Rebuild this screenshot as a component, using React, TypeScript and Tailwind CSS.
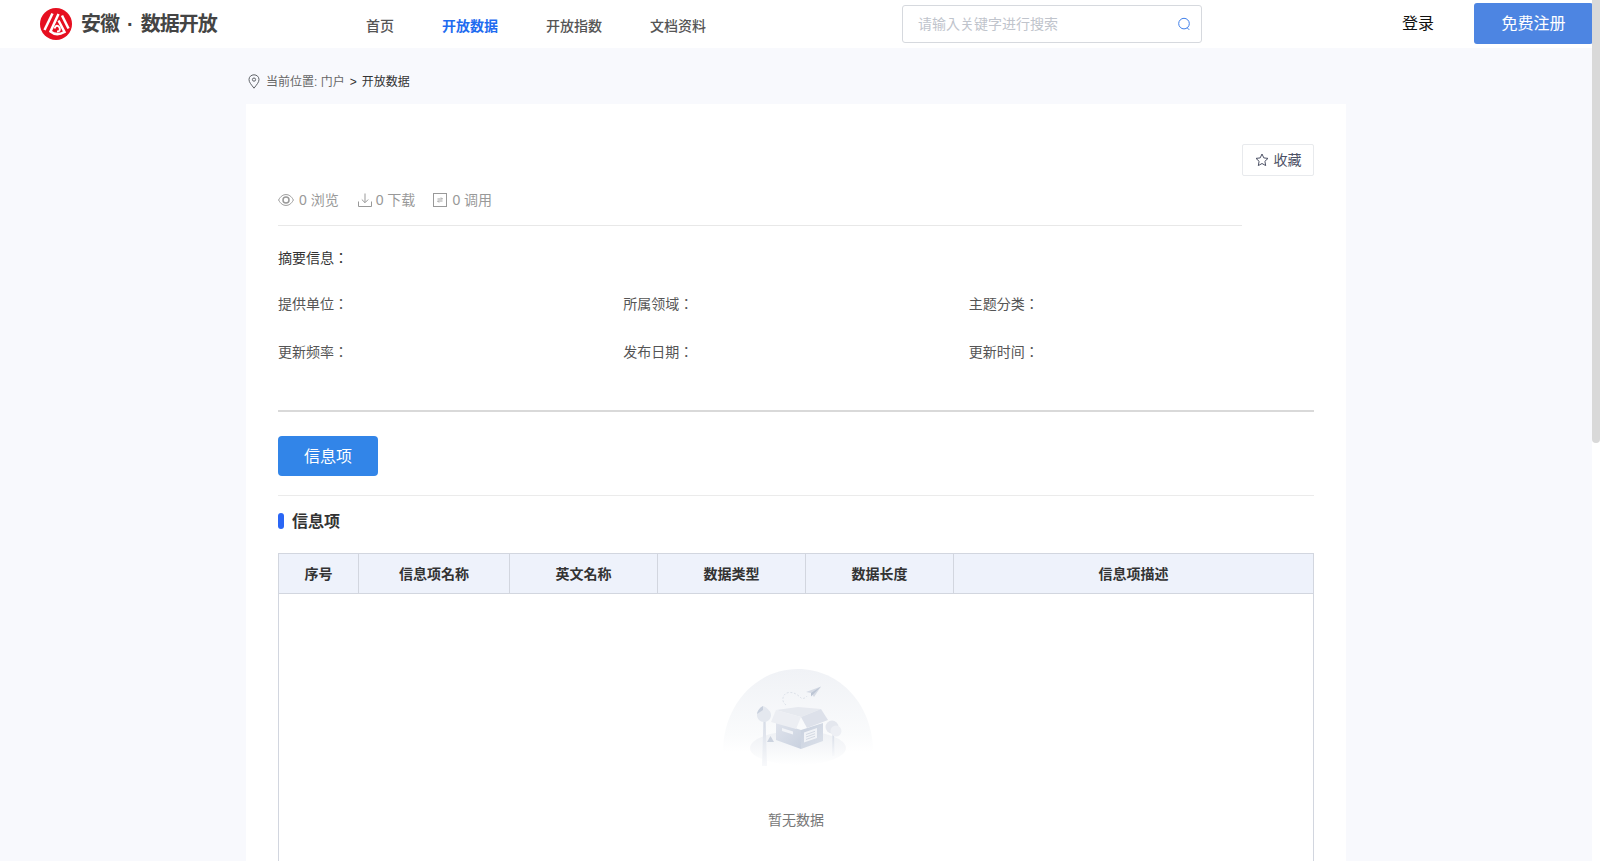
import React from "react";

function Logo() {
  return (
    <svg width="32" height="32" viewBox="0 0 32 32" className="shrink-0">
      <circle cx="16" cy="16" r="16" fill="#e60f20" />
      <g stroke="#fff" strokeWidth="2.5" fill="none">
        <path d="M12.5 5.5 L4.5 22" />
        <path d="M18.5 6 L10.5 23.5 Q16.5 28.5 24.5 24 L18.5 12.5" />
        <path d="M14.5 20.5 Q16.5 15.5 19.5 19.5 Q21 23.5 17 23.5" strokeWidth="2" />
        <path d="M22 7.5 L28.5 20.5" />
      </g>
    </svg>
  );
}

function Eye() {
  return (
    <svg width="16" height="16" viewBox="0 0 16 16" fill="none" stroke="#999" strokeWidth="1">
      <path d="M0.6 8 C2.8 3.8 5.5 2.6 8 2.6 C10.5 2.6 13.2 3.8 15.4 8 C13.2 12.2 10.5 13.4 8 13.4 C5.5 13.4 2.8 12.2 0.6 8 Z" />
      <circle cx="8" cy="8" r="3" strokeWidth="1.5" />
    </svg>
  );
}

function Download() {
  return (
    <svg width="14" height="14" viewBox="0 0 14 14" fill="none" stroke="#999" strokeWidth="1">
      <path d="M7 0.5 V9.5 M3.8 6.5 L7 9.7 L10.2 6.5" />
      <path d="M0.5 8.5 V13.5 H13.5 V8.5" />
    </svg>
  );
}

function CallIcon() {
  return (
    <svg width="14" height="14" viewBox="0 0 14 14" fill="none" stroke="#999" strokeWidth="1">
      <rect x="0.5" y="0.5" width="13" height="13" />
      <path d="M4.5 6 H9.5 L8 4.5 M9.5 8 H4.5 L6 9.5" strokeWidth="0.9" />
    </svg>
  );
}

function Pin() {
  return (
    <svg width="12" height="15" viewBox="0 0 12 15" fill="none" stroke="#5f6368" strokeWidth="1">
      <path d="M6 14.2 C3.5 10.8 1 8.4 1 5.6 C1 2.8 3.2 0.8 6 0.8 C8.8 0.8 11 2.8 11 5.6 C11 8.4 8.5 10.8 6 14.2 Z" />
      <circle cx="6" cy="5.6" r="1.6" />
    </svg>
  );
}

function Star() {
  return (
    <svg width="14" height="14" viewBox="0 0 14 14" fill="none" stroke="#4d5266" strokeWidth="1">
      <path d="M7 1 L8.8 4.9 L13 5.4 L9.9 8.3 L10.7 12.6 L7 10.5 L3.3 12.6 L4.1 8.3 L1 5.4 L5.2 4.9 Z" strokeLinejoin="round" />
    </svg>
  );
}

function SearchIcon() {
  return (
    <svg width="14" height="14" viewBox="0 0 14 14" fill="none" stroke="#3f7fea" strokeWidth="1">
      <circle cx="7" cy="6.6" r="5.3" />
      <path d="M10.4 11 L12 12.6" strokeLinecap="round" />
    </svg>
  );
}

function EmptyArt() {
  return (
    <svg width="160" height="120" viewBox="0 0 160 120" className="ml-[9px] block">
      <defs>
        <linearGradient id="dome" x1="0" y1="0" x2="0" y2="1">
          <stop offset="0" stopColor="#f0f2f6" />
          <stop offset="0.8" stopColor="#fafbfc" />
          <stop offset="1" stopColor="#ffffff" />
        </linearGradient>
        <linearGradient id="ground" x1="0" y1="0" x2="0" y2="1">
          <stop offset="0" stopColor="#eef0f4" />
          <stop offset="1" stopColor="#ffffff" />
        </linearGradient>
        <linearGradient id="boxL" x1="0" y1="0" x2="1" y2="1">
          <stop offset="0" stopColor="#dfe3ec" />
          <stop offset="1" stopColor="#c9d1df" />
        </linearGradient>
        <linearGradient id="boxR" x1="0" y1="0" x2="1" y2="1">
          <stop offset="0" stopColor="#c8d0de" />
          <stop offset="1" stopColor="#dce1ea" />
        </linearGradient>
        <linearGradient id="trunk" x1="0" y1="0" x2="0" y2="1">
          <stop offset="0" stopColor="#d4dae5" />
          <stop offset="1" stopColor="#f8f9fb" />
        </linearGradient>
      </defs>
      <path d="M2 92 C2 45 35 9 77 9 C119 9 152 45 152 92 Z" fill="url(#dome)" />
      <ellipse cx="77" cy="88" rx="48" ry="17" fill="url(#ground)" />
      <path d="M42.5 58 H44.5 L46 106 H41 Z" fill="url(#trunk)" />
      <path d="M42 46 C38 48 36 52 36 55 C36 59 39 62 43 62 C47 62 50 59 50 55 C50 52 47 48 42 46 Z" fill="#e4e8ef" />
      <path d="M42 46 C38 48 36 52 36 54 L42 50 Z" fill="#c8d0dd" />
      <path d="M111.5 72 H113 L113.5 96 H111 Z" fill="url(#trunk)" />
      <circle cx="111" cy="67" r="6.5" fill="#e4e7ee" />
      <circle cx="115" cy="71" r="5.5" fill="#edeff4" />
      <path d="M46 82 L49.5 76 L53 82 Z" fill="#ccd3df" />
      <path d="M55 50 L77 47 L100 49 L80 57 Z" fill="#e6e9ef" />
      <path d="M55 62 L80 70 V89 L55 80 Z" fill="url(#boxL)" />
      <path d="M80 70 L102 63 V81 L80 89 Z" fill="url(#boxR)" />
      <path d="M55 50 L50 62 L75 69 L80 57 Z" fill="#eceef3" />
      <path d="M100 49 L107 60 L86 68 L80 57 Z" fill="#dde1ea" />
      <path d="M61 68 L72 71.5 V74.5 L61 71 Z" fill="#f1f3f7" />
      <path d="M83 72.5 L96 68 V78 L83 82.5 Z" fill="#f1f3f7" />
      <path d="M85 74.5 L94 71.3 M85 77 L94 73.8 M85 79.5 L94 76.3" stroke="#c5cdda" strokeWidth="0.7" />
      <path d="M65 45 C60 42 61 33 68 32.5 C74 32 78 36 80 38 C82 39 85 38 86 36" stroke="#d3d9e3" strokeWidth="0.7" strokeDasharray="2 1.6" fill="none" />
      <path d="M85 32 L100 26.5 L93 37 L90 33 Z" fill="#d6dbe5" />
      <path d="M90 33 L100 26.5 L90 36.5 Z" fill="#bcc5d4" />
    </svg>
  );
}

const columns: [string, string][] = [
  ["序号", "w-[80px]"],
  ["信息项名称", "w-[151px]"],
  ["英文名称", "w-[148px]"],
  ["数据类型", "w-[148px]"],
  ["数据长度", "w-[148px]"],
  ["信息项描述", "flex-1"],
];

const navItems = ["首页", "开放数据", "开放指数", "文档资料"];

const rowOne = ["提供单位：", "所属领域：", "主题分类："];
const rowTwo = ["更新频率：", "发布日期：", "更新时间："];

export default function App() {
  return (
    <div className="flex h-[861px] w-[1600px] overflow-hidden bg-white font-['Liberation_Sans','Noto_Sans_CJK_JP',sans-serif]">
      <div className="flex w-[1592px] shrink-0 flex-col bg-[#f8f9fd]">
        <header className="flex h-12 shrink-0 items-center bg-white">
          <div className="ml-10 flex w-[326px] shrink-0 items-center gap-[9px]">
            <Logo />
            <div className="flex items-center text-[20px] leading-none font-bold tracking-[-1px] whitespace-nowrap text-[#444444]">
              <span>安徽</span>
              <span className="mx-[8px]">·</span>
              <span>数据开放</span>
            </div>
          </div>
          <nav className="mt-[4px] flex w-[536px] shrink-0 gap-12 text-sm font-medium whitespace-nowrap text-[#555555]">
            {navItems.map((item) => (
              <span key={item} className={item === "开放数据" ? "font-bold text-[#1f6cf0]" : ""}>
                {item}
              </span>
            ))}
          </nav>
          <div className="flex h-[38px] w-[300px] shrink-0 items-center justify-between rounded-[3px] border border-[#d6d9de] pr-[10px] pl-[15px] text-sm whitespace-nowrap text-[#c0c4cc]">
            <span>请输入关键字进行搜索</span>
            <SearchIcon />
          </div>
          <span className="ml-[200px] shrink-0 text-base whitespace-nowrap text-[#111111]">登录</span>
          <div className="mb-[1px] ml-10 flex h-[41px] w-[119px] shrink-0 items-center justify-center rounded-[3px] bg-[#4d85e2] text-base whitespace-nowrap text-white">
            免费注册
          </div>
        </header>

        <main className="mx-auto flex min-h-0 w-[1100px] flex-1 flex-col">
          <div className="flex h-14 shrink-0 items-center pt-[11px] text-xs text-[#666666]">
            <span className="ml-[2px]"><Pin /></span>
            <span className="ml-[6px]">当前位置: 门户</span>
            <span className="mx-[5px] text-[#333333]">&gt;</span>
            <span className="text-[#333333]">开放数据</span>
          </div>

          <section className="flex min-h-0 flex-1 flex-col bg-white px-8">
            <div className="mt-10 flex h-8 shrink-0 justify-end">
              <div className="flex h-8 w-[72px] items-center justify-center gap-[5px] rounded-[2px] border border-[#e8eaed] text-sm text-[#4d5266]">
                <Star />
                <span>收藏</span>
              </div>
            </div>

            <div className="mr-[72px] flex h-[50px] shrink-0 items-center border-b border-[#e8e8e8] pb-[1px] text-sm whitespace-nowrap text-[#999999]">
              <span className="flex items-center gap-[5px]"><Eye />0 浏览</span>
              <span className="ml-[19px] flex items-center gap-1"><Download />0 下载</span>
              <span className="ml-[18px] flex items-center gap-[5px]"><CallIcon />0 调用</span>
            </div>

            <div className="mt-[22px] shrink-0 text-sm leading-5 text-[#333333]">摘要信息：</div>

            <div className="mt-[26px] grid h-5 shrink-0 grid-cols-3 text-sm leading-5 text-[#555555]">
              {rowOne.map((t) => <span key={t}>{t}</span>)}
            </div>
            <div className="mt-[28px] grid h-5 shrink-0 grid-cols-3 text-sm leading-5 text-[#555555]">
              {rowTwo.map((t) => <span key={t}>{t}</span>)}
            </div>

            <div className="mt-[48px] h-[2px] shrink-0 bg-[#d9d9d9]" />

            <div className="mt-6 flex h-10 w-[100px] shrink-0 items-center justify-center rounded bg-[#3285e8] pt-[1px] text-base text-white">
              信息项
            </div>

            <div className="mt-[19px] h-px shrink-0 bg-[#ebebeb]" />

            <div className="mt-[17px] flex h-4 shrink-0 items-center gap-2">
              <span className="h-4 w-[6px] rounded-[3px] bg-[#2a66f5]" />
              <span className="pt-[2px] text-base font-bold text-[#333333]">信息项</span>
            </div>

            <div className="mt-[24px] flex min-h-0 flex-1 flex-col border border-b-0 border-[#d2d6df]">
              <div className="flex h-[40px] shrink-0 border-b border-[#d2d6df] bg-[#eef2fb] text-sm font-bold text-[#333333]">
                {columns.map(([label, width], i) => (
                  <div
                    key={label}
                    className={`flex items-center justify-center ${width} ${i < columns.length - 1 ? "border-r border-[#d2d6df]" : ""}`}
                  >
                    {label}
                  </div>
                ))}
              </div>
              <div className="flex flex-col items-center pt-[66px]">
                <EmptyArt />
                <div className="mt-[30px] text-sm leading-5 text-[#777777]">暂无数据</div>
              </div>
            </div>
          </section>
        </main>
      </div>
      <div className="w-2 shrink-0 bg-white">
        <div className="h-[443px] rounded-b-[4px] bg-[#d9d9d9]" />
      </div>
    </div>
  );
}
